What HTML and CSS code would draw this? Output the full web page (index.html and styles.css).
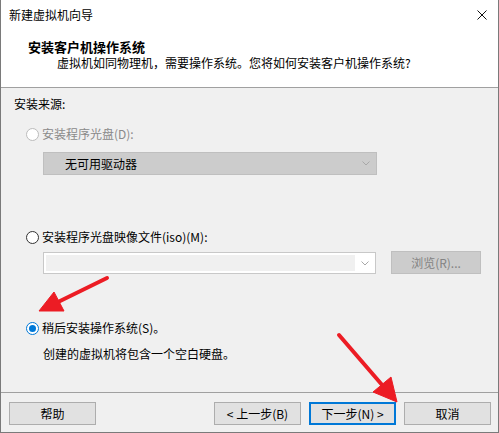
FILE: index.html
```html
<!DOCTYPE html>
<html lang="zh-CN">
<head>
<meta charset="utf-8">
<link rel="stylesheet" href="styles.css">
</head>
<body>
<div class="window">
  <div class="titlebar">
    <span class="title">新建虚拟机向导</span>
    <svg class="close" width="10" height="10" viewBox="0 0 10 10"><path d="M0.5 0.5L9.5 9.5M9.5 0.5L0.5 9.5" stroke="#111" stroke-width="1"/></svg>
  </div>
  <div class="header">
    <div class="h-title">安装客户机操作系统</div>
    <div class="h-sub">虚拟机如同物理机，需要操作系统。您将如何安装客户机操作系统?</div>
  </div>
  <div class="content">
    <div class="label">安装来源:</div>
    <div class="radio-row r1 disabled"><span class="radio"></span><span>安装程序光盘(D):</span></div>
    <div class="select"><span class="select-text">无可用驱动器</span><svg class="chev" width="8" height="5" viewBox="0 0 8 5"><path d="M0.5 0.5L4 4L7.5 0.5" fill="none" stroke="#a8a8a8" stroke-width="1"/></svg></div>
    <div class="radio-row r2"><span class="radio"></span><span>安装程序光盘映像文件(iso)(M):</span></div>
    <div class="iso-row">
      <div class="combo"><div class="combo-field"></div><svg class="chev" width="8" height="5" viewBox="0 0 8 5"><path d="M0.5 0.5L4 4L7.5 0.5" fill="none" stroke="#a8a8a8" stroke-width="1"/></svg></div>
      <div class="browse">浏览(R)...</div>
    </div>
    <div class="radio-row r3"><span class="radio checked"></span><span>稍后安装操作系统(S)。</span></div>
    <div class="desc">创建的虚拟机将包含一个空白硬盘。</div>
  </div>
  <div class="footer">
    <div class="btn">帮助</div>
    <div class="btn back">&lt; 上一步(B)</div>
    <div class="btn default">下一步(N) &gt;</div>
    <div class="btn">取消</div>
  </div>
  <svg class="arrows" width="499" height="433" viewBox="0 0 499 433">
    <g fill="#ec1c24" stroke="#ec1c24">
      <line x1="107" y1="278" x2="56" y2="303" stroke-width="4" stroke-linecap="round"/>
      <polygon points="39,311 54,292 64,311" stroke-width="1" stroke-linejoin="round"/>
      <line x1="339" y1="335" x2="383" y2="386" stroke-width="4" stroke-linecap="round"/>
      <polygon points="397,402 373,392 391,377" stroke-width="1" stroke-linejoin="round"/>
    </g>
  </svg>
</div>
</body>
</html>
```

FILE: styles.css
```css
* { box-sizing: border-box; }
html, body { margin: 0; padding: 0; }
body {
  font-family: "Noto Sans CJK SC", "Noto Sans", sans-serif;
  font-size: 12px;
  color: #000;
  background: #f0f0f0;
}
.window {
  position: relative;
  width: 499px;
  height: 433px;
  border: 1px solid #7a7a7a;
  border-top: none;
  background: #f0f0f0;
  display: flex;
  flex-direction: column;
}
.titlebar {
  height: 30px;
  background: #fff;
  display: flex;
  align-items: center;
  justify-content: space-between;
  padding: 0 11px 0 8px;
}
.title { line-height: 30px; }
.close { display: block; }
.header {
  height: 58px;
  background: #fff;
  border-bottom: 1px solid #a0a0a0;
  padding-top: 8px;
}
.h-title {
  font-weight: bold;
  font-size: 13px;
  line-height: 17px;
  margin-left: 27px;
}
.h-sub {
  line-height: 16px;
  margin-left: 56px;
}
.content {
  height: 304px;
  padding: 8px 0 0 13px;
}
.label { line-height: 16px; }
.radio-row {
  display: flex;
  align-items: center;
  gap: 3px;
  margin-left: 12px;
  line-height: 16px;
}
.radio-row.r1 { margin-top: 14px; }
.radio-row.r2 { margin-top: 54px; }
.radio-row.r3 { margin-top: 46px; }
.radio {
  width: 13px;
  height: 13px;
  border-radius: 50%;
  border: 1px solid #333;
  background: #fff;
  position: relative;
  flex: none;
}
.disabled { color: #8a8a8a; }
.disabled .radio { border-color: #bcbcbc; background: #fff; }
.radio.checked { border-color: #0078d7; }
.radio.checked::after {
  content: "";
  position: absolute;
  left: 2px; top: 2px;
  width: 7px; height: 7px;
  border-radius: 50%;
  background: #0078d7;
}
.select {
  margin: 10px 0 0 29px;
  width: 334px;
  height: 23px;
  background: #cccccc;
  border: 1px solid #bfbfbf;
  display: flex;
  align-items: center;
  justify-content: space-between;
  padding: 0 6px 0 21px;
}
.chev { display: block; }
.iso-row {
  display: flex;
  align-items: flex-start;
  margin: 6px 0 0 29px;
}
.combo {
  margin-top: 1px;
  width: 333px;
  height: 22px;
  background: #fff;
  border: 1px solid #c8c8c8;
  display: flex;
  align-items: center;
  padding: 2px 6px 2px 2px;
  gap: 6px;
}
.combo-field {
  flex: 1;
  height: 100%;
  background: #f0f0f0;
}
.browse {
  margin-left: 15px;
  width: 90px;
  height: 23px;
  background: #cccccc;
  border: 1px solid #bfbfbf;
  color: #838383;
  display: flex;
  align-items: center;
  justify-content: center;
}
.desc {
  margin: 10px 0 0 29px;
  line-height: 16px;
}
.footer {
  flex: 1;
  border-top: 1px solid #a0a0a0;
  display: flex;
  align-items: flex-start;
  gap: 8px;
  padding: 9px 7px 0 8px;
}
.btn {
  width: 87px;
  height: 23px;
  background: #e1e1e1;
  border: 1px solid #adadad;
  display: flex;
  align-items: center;
  justify-content: center;
}
.btn.back { margin-left: auto; }
.btn.default { border: 2px solid #0078d7; }
.arrows {
  position: absolute;
  left: -1px;
  top: 0;
  pointer-events: none;
}
```
